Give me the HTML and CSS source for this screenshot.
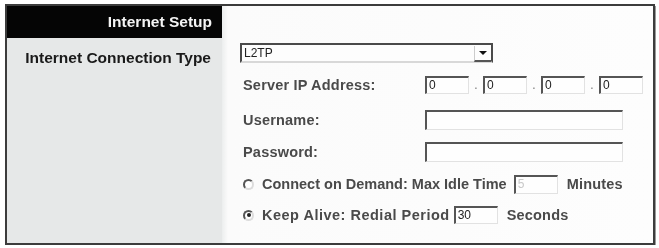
FILE: index.html
```html
<!DOCTYPE html>
<html>
<head>
<meta charset="utf-8">
<link rel="stylesheet" href="styles.css">
</head>
<body>
<div class="frame">
  <div class="side">
    <div class="side-head">Internet Setup</div>
    <div class="side-label">Internet Connection Type</div>
  </div>
  <div class="main">
    <div class="row">
      <div class="select"><span class="select-val">L2TP</span><span class="select-btn"><span class="arrow"></span></span></div>
    </div>
    <div class="row row-ip">
      <div class="label">Server IP Address:</div>
      <div class="ip">
        <span class="field f-ip">0</span><span class="dot">.</span>
        <span class="field f-ip">0</span><span class="dot">.</span>
        <span class="field f-ip">0</span><span class="dot">.</span>
        <span class="field f-ip">0</span>
      </div>
    </div>
    <div class="row row-user">
      <div class="label">Username:</div>
      <span class="field f-wide"></span>
    </div>
    <div class="row row-pwd">
      <div class="label">Password:</div>
      <span class="field f-wide"></span>
    </div>
    <div class="row row-r1">
      <span class="radio"></span>
      <span class="rtext rtext-connect">Connect on Demand: Max Idle Time</span>
      <span class="field f-small f-idle dis">5</span>
      <span class="unit">Minutes</span>
    </div>
    <div class="row row-r2">
      <span class="radio checked"></span>
      <span class="rtext rtext-keep">Keep Alive: Redial Period</span>
      <span class="field f-small f-redial">30</span>
      <span class="unit">Seconds</span>
    </div>
  </div>
</div>
</body>
</html>
```
FILE: styles.css
```css
html, body {
  margin: 0;
  padding: 0;
  background: #ffffff;
}
body {
  font-family: "Liberation Sans", Arial, sans-serif;
}
.frame {
  margin: 4px 0 0 5px;
  width: 646px;
  height: 237px;
  border: 2px solid #3c3c3c;
  box-shadow: 1px 2px 0 #9a9a9a;
  display: flex;
  filter: blur(0.45px);
}
.side {
  width: 215px;
  background: #e6e8e8;
  display: flex;
  flex-direction: column;
}
.side-head {
  height: 32px;
  background: #050505;
  color: #f4f4f4;
  font-weight: bold;
  font-size: 15.5px;
  line-height: 32px;
  text-align: right;
  padding-right: 10px;
}
.side-label {
  padding-top: 11px;
  padding-right: 11px;
  text-align: right;
  font-weight: bold;
  font-size: 15.5px;
  line-height: 18px;
  color: #1a1a1a;
}
.main {
  flex: 1;
  background: linear-gradient(to right, #eceeee 0, #fbfbfb 6px, #fdfdfd 100%);
  padding: 37px 0 0 18px;
  display: flex;
  flex-direction: column;
}
.row {
  height: 20px;
  display: flex;
  align-items: center;
  font-size: 14.5px;
  letter-spacing: 0.2px;
  font-weight: bold;
  color: #4a4a4a;
}
.row-ip { margin-top: 12px; }
.row-user { margin-top: 15px; }
.row-pwd { margin-top: 12px; }
.row-r1 { margin-top: 12px; }
.row-r2 { margin-top: 11px; }
.label {
  width: 182px;
  padding-left: 3px;
}
.select {
  width: 249px;
  height: 16px;
  border-top: 2px solid #4a4a4a;
  border-left: 2px solid #4a4a4a;
  border-right: 2px solid #4a4a4a;
  border-bottom: 2px solid #d8d8d8;
  display: flex;
  justify-content: space-between;
  background: #fdfdfd;
}
.select-val {
  font-size: 12px;
  font-weight: normal;
  letter-spacing: 0;
  color: #222;
  line-height: 16px;
  padding-left: 2px;
}
.select-btn {
  width: 16px;
  height: 14px;
  margin-top: 1px;
  border-left: 1px solid #cccccc;
  border-bottom: 2px solid #555;
  display: flex;
  align-items: center;
  justify-content: center;
}
.arrow {
  width: 0;
  height: 0;
  border-left: 4px solid transparent;
  border-right: 4px solid transparent;
  border-top: 4px solid #111;
}
.ip {
  display: flex;
  align-items: center;
}
.field {
  box-sizing: border-box;
  height: 18px;
  border-top: 2px solid #555;
  border-left: 2px solid #555;
  border-right: 1px solid #e2e2e2;
  border-bottom: 1px solid #e2e2e2;
  background: #fefefe;
  font-size: 12px;
  font-weight: normal;
  letter-spacing: 0;
  color: #222;
  line-height: 15px;
  padding-left: 2px;
}
.f-ip { width: 44px; }
.dot {
  width: 14px;
  text-align: center;
  font-weight: normal;
  color: #777;
  font-size: 12px;
}
.f-wide {
  width: 198px;
  height: 20px;
}
.radio {
  box-sizing: border-box;
  width: 11px;
  height: 11px;
  border-radius: 50%;
  border: 2px solid #dcdcdc;
  border-top-color: #555;
  border-left-color: #555;
  margin-left: 3px;
  margin-right: 8px;
  position: relative;
  background: #fff;
}
.radio.checked::after {
  content: "";
  position: absolute;
  left: 1.5px;
  top: 1.5px;
  width: 4px;
  height: 4px;
  border-radius: 50%;
  background: #222;
}
.rtext-connect {
  letter-spacing: 0;
}
.rtext-keep {
  letter-spacing: 0.5px;
}
.f-small {
  width: 44px;
  height: 19px;
}
.f-idle {
  margin-left: 7px;
}
.f-redial {
  margin-left: 4px;
  height: 18px;
}
.dis { color: #c8c8c8; }
.unit {
  margin-left: 9px;
}
```
